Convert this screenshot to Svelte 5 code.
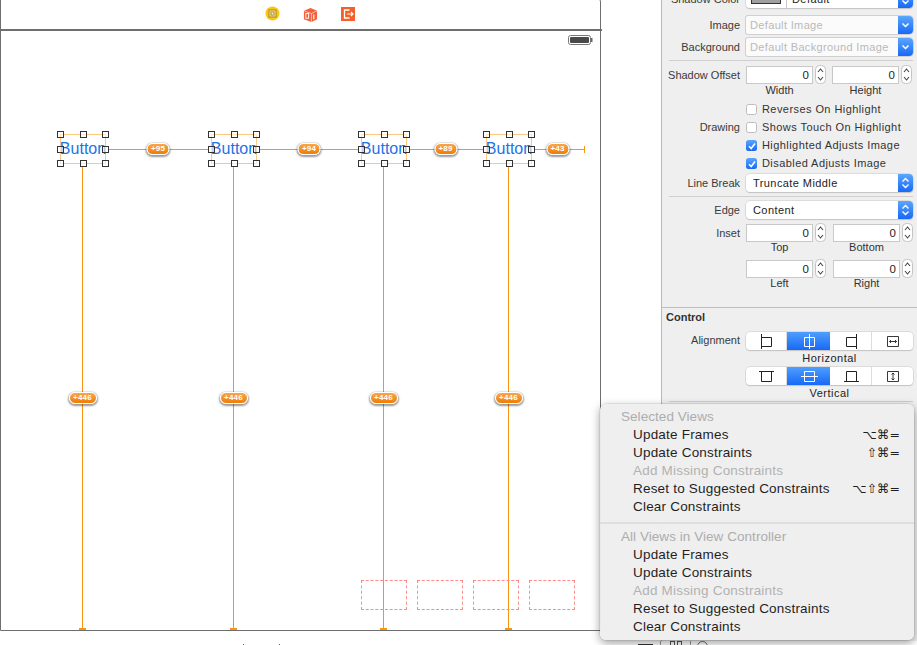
<script>
  const buttons = [
    { x: 60, cx: 82.5 },
    { x: 211, cx: 233.5 },
    { x: 361, cx: 383.5 },
    { x: 486, cx: 508.5 }
  ];
  const handles = [
    [0, 0], [0.5, 0], [1, 0],
    [0, 0.5], [1, 0.5],
    [0, 1], [0.5, 1], [1, 1]
  ];
  const hLines = [
    { x: 109, w: 99 },
    { x: 260, w: 98 },
    { x: 410, w: 73 },
    { x: 535, w: 50 }
  ];
  const hPills = [
    { x: 158, t: '+95' },
    { x: 309, t: '+94' },
    { x: 445.5, t: '+89' },
    { x: 557.5, t: '+43' }
  ];
  const dashed = [361, 417, 473, 529];
  const menu = [
    { h: 'Selected Views' },
    { t: 'Update Frames', k: '⌥⌘=' },
    { t: 'Update Constraints', k: '⇧⌘=' },
    { t: 'Add Missing Constraints', off: true },
    { t: 'Reset to Suggested Constraints', k: '⌥⇧⌘=' },
    { t: 'Clear Constraints' },
    { sep: true },
    { h: 'All Views in View Controller' },
    { t: 'Update Frames' },
    { t: 'Update Constraints' },
    { t: 'Add Missing Constraints', off: true },
    { t: 'Reset to Suggested Constraints' },
    { t: 'Clear Constraints' }
  ];
  const checks = [
    { t: 'Reverses On Highlight', on: false },
    { t: 'Shows Touch On Highlight', on: false, label: 'Drawing' },
    { t: 'Highlighted Adjusts Image', on: true },
    { t: 'Disabled Adjusts Image', on: true }
  ];
</script>

{#snippet stepper()}
  <svg class="stepper" viewBox="0 0 11 19" width="11" height="19">
    <rect x="0.5" y="0.5" width="10" height="18" rx="4" fill="#fff" stroke="#c4c4c4" />
    <path d="M3 7l2.5-3 2.5 3M3 12l2.5 3 2.5-3" fill="none" stroke="#444" stroke-width="1.1" />
  </svg>
{/snippet}

{#snippet num(caption)}
  <div class="numcell">
    <div class="numline">
      <div class="field">0</div>
      {@render stepper()}
    </div>
    <div class="caption">{caption}</div>
  </div>
{/snippet}

{#snippet combo(text)}
  <div class="combo">
    <span class="placeholder">{text}</span>
    <span class="bluecap">
      <svg viewBox="0 0 15 18" width="15" height="18"><path d="M4.5 7.5l3 3 3-3" fill="none" stroke="#fff" stroke-width="1.5" /></svg>
    </span>
  </div>
{/snippet}

{#snippet popup(text)}
  <div class="popup">
    <span class="ptext">{text}</span>
    <span class="bluecap">
      <svg viewBox="0 0 15 18" width="15" height="18"><path d="M4.5 7.5l3-3 3 3M4.5 10.5l3 3 3-3" fill="none" stroke="#fff" stroke-width="1.4" /></svg>
    </span>
  </div>
{/snippet}

<div class="app">
  <div class="stage">
    <div class="frame"></div>
    <div class="frameline"></div>

    <svg class="topicon yellow" viewBox="0 0 15 15" width="15" height="15">
      <circle cx="7.5" cy="7.5" r="7" fill="#fbc711" />
      <rect x="4" y="4" width="7" height="7" fill="#f6e29a" stroke="#a58a2a" />
      <rect x="6" y="6" width="3" height="3" fill="#fff7d8" stroke="#a58a2a" />
    </svg>
    <svg class="topicon cube" viewBox="0 0 16 16" width="15" height="15">
      <path d="M8 1l7 3v9l-6 3-8-3V4z" fill="#f2603c" />
      <path d="M1 4l8 3 6-3M9 7v9" fill="none" stroke="#ffd9cc" stroke-width="0.8" />
      <rect x="3" y="7" width="3" height="5" fill="none" stroke="#fff" stroke-width="1" />
      <path d="M11.5 8v5" stroke="#fff" stroke-width="1.2" />
    </svg>
    <svg class="topicon exit" viewBox="0 0 14 14" width="14" height="14">
      <rect width="14" height="14" fill="#f4602a" />
      <path d="M8.5 3H3.5v8h5" fill="none" stroke="#fff" stroke-width="1.3" />
      <path d="M6 7h6M10 5l2 2-2 2" fill="none" stroke="#fff" stroke-width="1.1" />
    </svg>

    <svg class="battery" viewBox="0 0 25 11" width="25" height="11">
      <rect x="0.5" y="0.5" width="22" height="9" rx="2" fill="#fff" stroke="#777" />
      <rect x="2" y="2" width="19" height="6" rx="1" fill="#4a4a4a" />
      <rect x="23" y="3" width="1.5" height="4" fill="#666" />
    </svg>

    {#each hLines as l}
      <div class="hline" style="left:{l.x}px;width:{l.w}px"></div>
    {/each}
    <div class="hcap"></div>

    {#each buttons as b}
      <div class="vline" style="left:{b.cx - 1}px"></div>
      <div class="vcap" style="left:{b.cx - 4}px"></div>
      <div class="btnbox" style="left:{b.x}px">
        <span class="btntext">Button</span>
        {#each handles as h}
          <span class="handle" style="left:{h[0] * 45 - 4}px;top:{h[1] * 29 - 4}px"></span>
        {/each}
      </div>
      <div class="pill vp" style="left:{b.cx}px">+446</div>
    {/each}

    {#each hPills as p}
      <div class="pill hp" style="left:{p.x}px">{p.t}</div>
    {/each}

    {#each dashed as d}
      <div class="dash" style="left:{d}px"></div>
    {/each}

    <div class="scrap s1"></div>
    <div class="scrap s2"></div>
    <div class="blackbar"></div>
  </div>

  <aside class="inspector">
    <div class="row shadow">
      <div class="label">Shadow Color</div>
      <div class="popup">
        <span class="well"><span class="swatch"></span></span>
        <span class="ptext">Default</span>
        <span class="bluecap">
          <svg viewBox="0 0 15 18" width="15" height="18"><path d="M4.5 7.5l3-3 3 3M4.5 10.5l3 3 3-3" fill="none" stroke="#fff" stroke-width="1.4" /></svg>
        </span>
      </div>
    </div>
    <div class="row mt8">
      <div class="label">Image</div>
      {@render combo('Default Image')}
    </div>
    <div class="row mt4">
      <div class="label">Background</div>
      {@render combo('Default Background Image')}
    </div>
    <div class="sep s-a"></div>

    <div class="row numrow offset">
      <div class="label">Shadow Offset</div>
      <div class="nums">
        {@render num('Width')}
        {@render num('Height')}
      </div>
    </div>

    <div class="checks">
      {#each checks as c}
        <div class="row check">
          <div class="label">{c.label ?? ''}</div>
          <div class="checkline">
            <span class="box" class:on={c.on}>
              {#if c.on}
                <svg viewBox="0 0 12 12" width="12" height="12"><path d="M3 6.2l2.2 2.4L9 3.5" fill="none" stroke="#fff" stroke-width="1.6" /></svg>
              {/if}
            </span>
            <span>{c.t}</span>
          </div>
        </div>
      {/each}
    </div>

    <div class="row lb">
      <div class="label">Line Break</div>
      {@render popup('Truncate Middle')}
    </div>
    <div class="sep s-b"></div>
    <div class="row edge">
      <div class="label">Edge</div>
      {@render popup('Content')}
    </div>
    <div class="row numrow inset">
      <div class="label">Inset</div>
      <div class="nums wide">
        {@render num('Top')}
        {@render num('Bottom')}
      </div>
    </div>
    <div class="row numrow lr">
      <div class="label"></div>
      <div class="nums wide">
        {@render num('Left')}
        {@render num('Right')}
      </div>
    </div>

    <div class="fullsep"></div>
    <div class="sectitle">Control</div>

    <div class="row seg1">
      <div class="label alignlabel">Alignment</div>
      <div class="segs">
        <div class="seg w41">
          <svg viewBox="0 0 20 17" width="20" height="17"><path d="M5.5 1v15M5.5 4.5h10v9h-10" fill="none" stroke="#222" /></svg>
        </div>
        <div class="seg w43 sel">
          <svg viewBox="0 0 20 17" width="20" height="17"><path d="M5.5 4.5h10v9h-10zM10.5 1v15" fill="none" stroke="#fff" /></svg>
        </div>
        <div class="seg w42">
          <svg viewBox="0 0 20 17" width="20" height="17"><path d="M15.5 1v15M15.5 4.5h-10v9h10" fill="none" stroke="#222" /></svg>
        </div>
        <div class="seg w42">
          <svg viewBox="0 0 20 17" width="20" height="17"><path d="M4.5 3.5h11v10h-11zM6.5 8.5h7M8 7l-1.5 1.5L8 10M12 7l1.5 1.5L12 10" fill="none" stroke="#222" stroke-width="0.9" /></svg>
        </div>
      </div>
    </div>
    <div class="segcap">Horizontal</div>
    <div class="row seg2">
      <div class="label"></div>
      <div class="segs">
        <div class="seg w41">
          <svg viewBox="0 0 20 17" width="20" height="17"><path d="M3 3.5h15M5.5 3.5v10h10v-10" fill="none" stroke="#222" /></svg>
        </div>
        <div class="seg w43 sel">
          <svg viewBox="0 0 20 17" width="20" height="17"><path d="M5.5 3.5h10v10h-10zM2 8.5h17" fill="none" stroke="#fff" /></svg>
        </div>
        <div class="seg w42">
          <svg viewBox="0 0 20 17" width="20" height="17"><path d="M3 13.5h15M5.5 13.5v-10h10v10" fill="none" stroke="#222" /></svg>
        </div>
        <div class="seg w42">
          <svg viewBox="0 0 20 17" width="20" height="17"><path d="M4.5 3.5h11v10h-11zM10 5v7M8.5 6.5L10 5l1.5 1.5M8.5 10.5L10 12l1.5-1.5" fill="none" stroke="#222" stroke-width="0.9" /></svg>
        </div>
      </div>
    </div>
    <div class="segcap">Vertical</div>
    <div class="sep s-c"></div>
  </aside>

  <div class="peek">
    <span class="peekline"></span>
    <span class="peeksq"></span>
    <span class="peeksq"></span>
    <span class="peekline"></span>
    <span class="peekring"></span>
  </div>

  <div class="menu">
    {#each menu as m}
      {#if m.sep}
        <div class="msep"></div>
      {:else if m.h}
        <div class="mhead">{m.h}</div>
      {:else}
        <div class="mitem" class:muted={m.off}>
          <span>{m.t}</span>
          {#if m.k}<span class="mkey">{m.k}</span>{/if}
        </div>
      {/if}
    {/each}
  </div>
</div>

<style>
  :global(body) {
    margin: 0;
    background: #fff;
  }
  .app {
    position: relative;
    display: flex;
    width: 917px;
    height: 645px;
    overflow: hidden;
    font-family: "Liberation Sans", Arial, sans-serif;
  }

  /* free canvas */
  .stage {
    position: relative;
    flex: 0 0 661px;
    background: #fff;
  }
  .frame {
    position: absolute;
    left: 0;
    top: -8px;
    width: 599px;
    height: 636.5px;
    border-style: solid;
    border-color: #6e6e6e;
    border-width: 1.5px 1.5px 1.5px 1.5px;
    border-top-right-radius: 10px;
  }
  .frameline {
    position: absolute;
    left: 0;
    top: 29px;
    width: 602px;
    height: 1.5px;
    background: #6e6e6e;
  }
  .topicon { position: absolute; }
  .yellow { left: 265px; top: 6px; }
  .cube { left: 303px; top: 7px; }
  .exit { left: 341px; top: 7px; }
  .battery { position: absolute; left: 568px; top: 35px; }

  .hline {
    position: absolute;
    top: 148.5px;
    height: 1px;
    background: #fb9413;
  }
  .hcap {
    position: absolute;
    left: 584px;
    top: 146px;
    width: 1px;
    height: 7px;
    background: #fb9413;
  }
  .vline {
    position: absolute;
    top: 167px;
    width: 1px;
    height: 463px;
    background: #fb9413;
  }
  .vcap {
    position: absolute;
    top: 628px;
    width: 7px;
    height: 2px;
    background: #fb9413;
  }
  .btnbox {
    position: absolute;
    top: 134px;
    width: 46px;
    height: 30px;
    box-sizing: border-box;
    border: 1px solid #fcc683;
  }
  .btntext {
    position: absolute;
    left: -2px;
    right: -2px;
    top: 5px;
    text-align: center;
    white-space: nowrap;
    font-size: 16px;
    line-height: 18px;
    color: #1b73e8;
  }
  .handle {
    position: absolute;
    width: 5px;
    height: 5px;
    background: rgba(255, 255, 255, 0.6);
    border: 1px solid #333;
  }
  .pill {
    position: absolute;
    transform: translateX(-50%);
    height: 10px;
    line-height: 10px;
    text-align: center;
    color: #fff;
    font-size: 8px;
    font-weight: bold;
    letter-spacing: 0.2px;
    background: linear-gradient(#f9a64a, #ef7d06);
    border: 1.5px solid #fff;
    border-radius: 7px;
    box-shadow: 0 1px 2px 1px rgba(0, 0, 0, 0.4);
  }
  .hp { top: 143px; width: 21px; }
  .vp { top: 391.5px; width: 26px; }
  .dash {
    position: absolute;
    top: 580px;
    width: 46px;
    height: 30px;
    box-sizing: border-box;
    border: 1px dashed #ff8a8a;
  }
  .scrap {
    position: absolute;
    top: 644px;
    width: 1px;
    height: 1px;
    background: #667;
  }
  .s1 { left: 243px; }
  .s2 { left: 279px; }
  .blackbar {
    position: absolute;
    left: 638px;
    top: 644px;
    width: 15px;
    height: 1px;
    background: #333;
  }

  /* inspector */
  .inspector {
    flex: 0 0 256px;
    box-sizing: border-box;
    height: 645px;
    display: flex;
    flex-direction: column;
    background: #efefef;
    border-left: 1px solid #b8b8b8;
    font-size: 11px;
    color: #333;
    overflow: hidden;
  }
  .row {
    display: flex;
    align-items: center;
    flex: none;
    height: 18px;
    margin-top: 0;
  }
  .label {
    flex: 0 0 78px;
    text-align: right;
    margin-right: 6px;
    white-space: nowrap;
    color: #3a3a3a;
  }
  .alignlabel { margin-top: -2px; }
  .shadow { margin-top: -10px; }
  .mt8 { margin-top: 8px; }
  .mt4 { margin-top: 4px; }
  .sep {
    flex: none;
    height: 1px;
    margin-left: 7px;
    margin-right: 4px;
    background: #cfcfcf;
  }
  .s-a { margin-top: 4px; }
  .s-b { margin-top: 4px; }
  .s-c { margin-top: 1px; }

  .popup, .combo {
    position: relative;
    flex: 0 0 167px;
    height: 18px;
    display: flex;
    align-items: center;
    box-sizing: border-box;
    background: #fff;
    border-radius: 4px;
    box-shadow: 0 0 0 0.5px #c8c8c8, 0 1px 1px rgba(0, 0, 0, 0.2);
    color: #222;
    overflow: hidden;
  }
  .combo {
    border-radius: 2px 4px 4px 2px;
    box-shadow: 0 0 0 1px #d0d0d0;
    background: #fbfbfb;
  }
  .ptext { padding-left: 7px; letter-spacing: 0.42px; }
  .placeholder { padding-left: 4px; color: #b9b9b9; letter-spacing: 0.35px; }
  .bluecap {
    position: absolute;
    right: 0;
    top: 0;
    width: 15px;
    height: 18px;
    background: linear-gradient(#5ba6fd, #1769f7);
  }
  .bluecap svg { display: block; }
  .well {
    flex: 0 0 41px;
    height: 18px;
    box-sizing: border-box;
    border-right: 1px solid #c8c8c8;
    display: flex;
    align-items: center;
    justify-content: center;
  }
  .swatch {
    width: 30px;
    height: 16px;
    margin-top: -6px;
    background: #a0a0a0;
    border: 1px solid #333;
    box-sizing: border-box;
  }
  .well + .ptext { padding-left: 5px; }

  .numrow { height: 18px; align-items: flex-start; }
  .numrow .label { line-height: 20px; }
  .offset { margin-top: 4px; }
  .nums { display: flex; gap: 6px; }
  .nums.wide { gap: 7px; }
  .nums.wide .caption { margin-top: -1px; }
  .numcell { width: 80px; }
  .numline { display: flex; align-items: center; gap: 2px; }
  .field {
    flex: 0 0 67px;
    box-sizing: border-box;
    height: 18px;
    line-height: 17px;
    text-align: right;
    padding-right: 3px;
    background: #fff;
    border: 1px solid #c9c9c9;
    color: #222;
    font-size: 11.5px;
  }
  .stepper { display: block; flex: none; }
  .caption {
    text-align: center;
    width: 67px;
    line-height: 13px;
    color: #333;
  }
  .checks {
    display: flex;
    flex-direction: column;
    margin-top: 17px;
    flex: none;
  }
  .check { height: 18px; }
  .checkline {
    display: flex;
    align-items: center;
    gap: 5px;
    letter-spacing: 0.43px;
    color: #333;
    white-space: nowrap;
  }
  .box {
    flex: 0 0 11px;
    height: 11px;
    box-sizing: border-box;
    background: #fff;
    border: 1px solid #bdbdbd;
    border-radius: 2.5px;
    position: relative;
  }
  .box.on {
    border: none;
    background: linear-gradient(#5ba6fd, #1769f7);
  }
  .box svg { display: block; position: absolute; left: 0; top: 0; }
  .lb { margin-top: 2px; }
  .edge { margin-top: 4px; }
  .inset { margin-top: 4px; }
  .lr { margin-top: 18px; }
  .fullsep {
    flex: none;
    height: 1px;
    margin-top: 30px;
    background: #bfbfbf;
  }
  .sectitle {
    flex: none;
    margin: 3px 0 0 4px;
    line-height: 13px;
    font-weight: bold;
    color: #333;
  }
  .seg1 { margin-top: 8px; }
  .seg2 { margin-top: 2px; }
  .segs {
    flex: 0 0 167px;
    height: 18px;
    display: flex;
    overflow: hidden;
    background: #fff;
    border-radius: 4px;
    box-shadow: 0 0 0 0.5px #c8c8c8, 0 1px 1px rgba(0, 0, 0, 0.2);
  }
  .seg {
    display: flex;
    align-items: center;
    justify-content: center;
    box-sizing: border-box;
    height: 18px;
    border-right: 1px solid #dcdcdc;
  }
  .seg:last-child { border-right: none; }
  .w41 { flex: 0 0 41px; }
  .w42 { flex: 0 0 42px; }
  .w43 { flex: 0 0 43px; }
  .sel { background: linear-gradient(#4f9efc, #1769f7); border-right: none; }
  .segcap {
    flex: none;
    margin-top: 2px;
    padding-left: 84px;
    width: 167px;
    text-align: center;
    line-height: 13px;
    height: 13px;
    color: #222;
    letter-spacing: 0.5px;
  }

  /* sliver of the toolbar below the open menu */
  .peek {
    position: absolute;
    left: 660px;
    top: 641px;
    width: 257px;
    height: 4px;
    display: flex;
    gap: 1px;
    background: #fff;
    overflow: hidden;
  }
  .peekline {
    flex: 0 0 1px;
    background: #9a9a9a;
  }
  .peeksq {
    flex: 0 0 5px;
    height: 6px;
    box-sizing: border-box;
    border: 1px solid #555;
  }
  .peek > .peekline:first-child { margin-right: 8px; }
  .peek > .peeksq + .peeksq { margin-left: 1px; margin-right: 7px; }
  .peekring {
    flex: 0 0 11px;
    height: 11px;
    margin-left: 5px;
    box-sizing: border-box;
    border: 1px solid #666;
    border-radius: 50%;
  }

  /* context menu */
  .menu {
    position: absolute;
    left: 600px;
    top: 404px;
    width: 314px;
    height: 236px;
    box-sizing: border-box;
    padding-top: 4px;
    border-radius: 6px;
    background: rgba(238, 238, 238, 0.97);
    box-shadow: 0 3px 10px rgba(0, 0, 0, 0.38), 0 0 0 0.5px rgba(0, 0, 0, 0.12);
    font-size: 13.5px;
    color: #1f1f1f;
  }
  .mhead {
    height: 18px;
    line-height: 18px;
    padding-left: 21px;
    color: #adadad;
    letter-spacing: 0.05px;
  }
  .mitem {
    display: flex;
    justify-content: space-between;
    height: 18px;
    line-height: 18px;
    padding: 0 14px 0 33px;
    letter-spacing: 0.2px;
  }
  .mitem.muted { color: #b2b2b2; }
  .mkey {
    font-family: "DejaVu Sans", sans-serif;
    font-size: 12.5px;
    letter-spacing: 0;
  }
  .msep {
    height: 2px;
    margin: 6px 0 4px;
    background: #dedede;
  }
</style>
